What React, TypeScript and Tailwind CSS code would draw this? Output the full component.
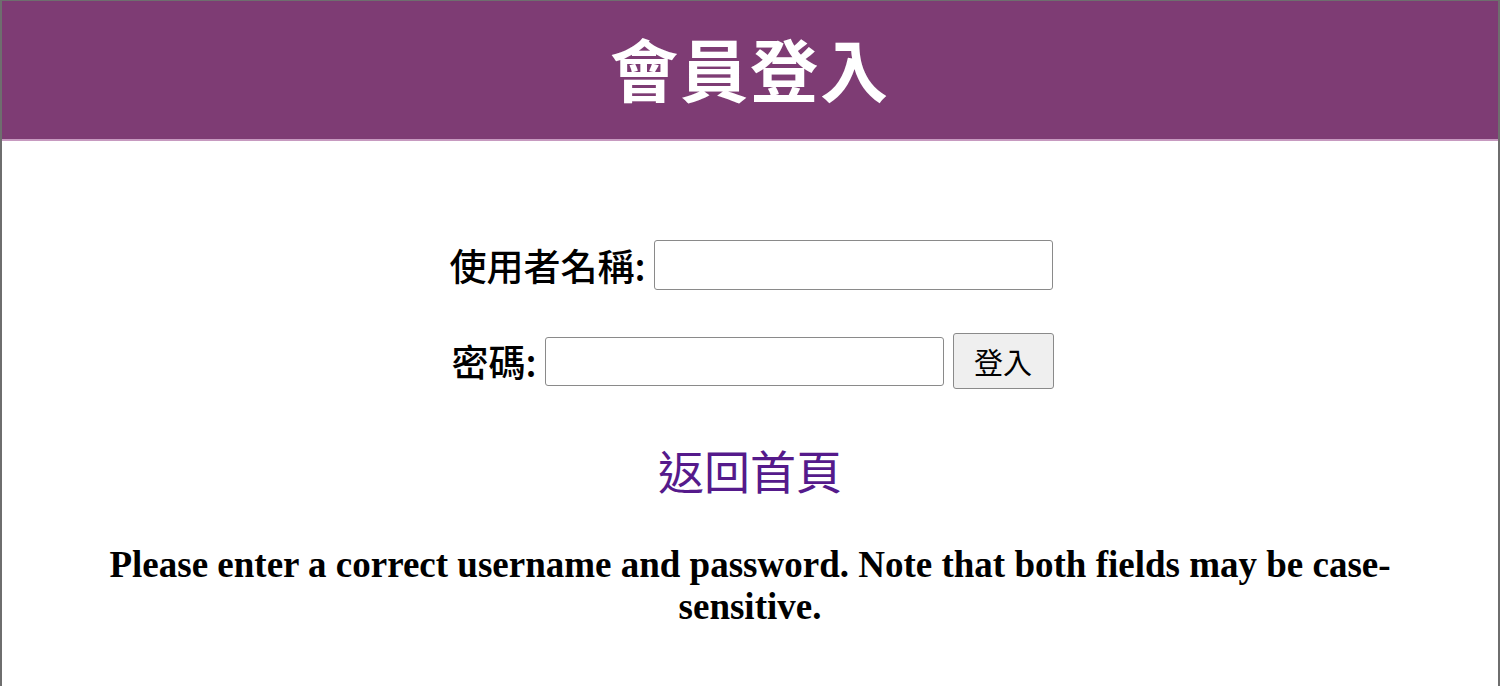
import React from "react";

const cjk = "font-['Noto_Sans_CJK_TC','Noto_Sans',sans-serif]";

const App: React.FC = () => {
  return (
    <div className="h-[686px] w-[1500px] overflow-hidden bg-white border-t border-l-2 border-r-2 border-[#6e6e6e] box-border">
      <header className="h-[140px] bg-[#7e3c74] border-b-2 border-[#c79ac0] flex items-center justify-center">
        <h1 className={`${cjk} text-white font-bold text-[68px] leading-none tracking-[2px] -mt-[4px]`}>
          會員登入
        </h1>
      </header>

      <form className={`${cjk} flex flex-col items-center pt-[99px]`}>
        <div className="flex items-center gap-[8px] ml-[2px]">
          <label className="text-[37px] font-medium text-black leading-none">使用者名稱:</label>
          <input
            type="text"
            className="w-[399px] h-[50px] border border-[#8a8a8a] rounded-[3px] bg-white"
          />
        </div>

        <div className="flex items-center mt-[43px] ml-[5px]">
          <label className="text-[37px] font-medium text-black leading-none mr-[8px]">密碼:</label>
          <input
            type="password"
            className="w-[399px] h-[49px] border border-[#8a8a8a] rounded-[3px] bg-white"
          />
          <button
            type="button"
            className="ml-[9px] w-[101px] h-[56px] border border-[#8a8a8a] rounded-[3px] bg-[#efefef] text-[29px] text-black leading-none"
          >
            登入
          </button>
        </div>

        <a href="#" className="mt-[57px] text-[46px] font-normal text-[#551a8b] leading-none no-underline">
          返回首頁
        </a>
      </form>

      <p className="mt-[52px] mx-auto w-[1320px] text-center font-['Liberation_Serif',serif] font-bold text-[37px] leading-[42px] text-black">
        Please enter a correct username and password. Note that both fields may be case-sensitive.
      </p>
    </div>
  );
};

export default App;
